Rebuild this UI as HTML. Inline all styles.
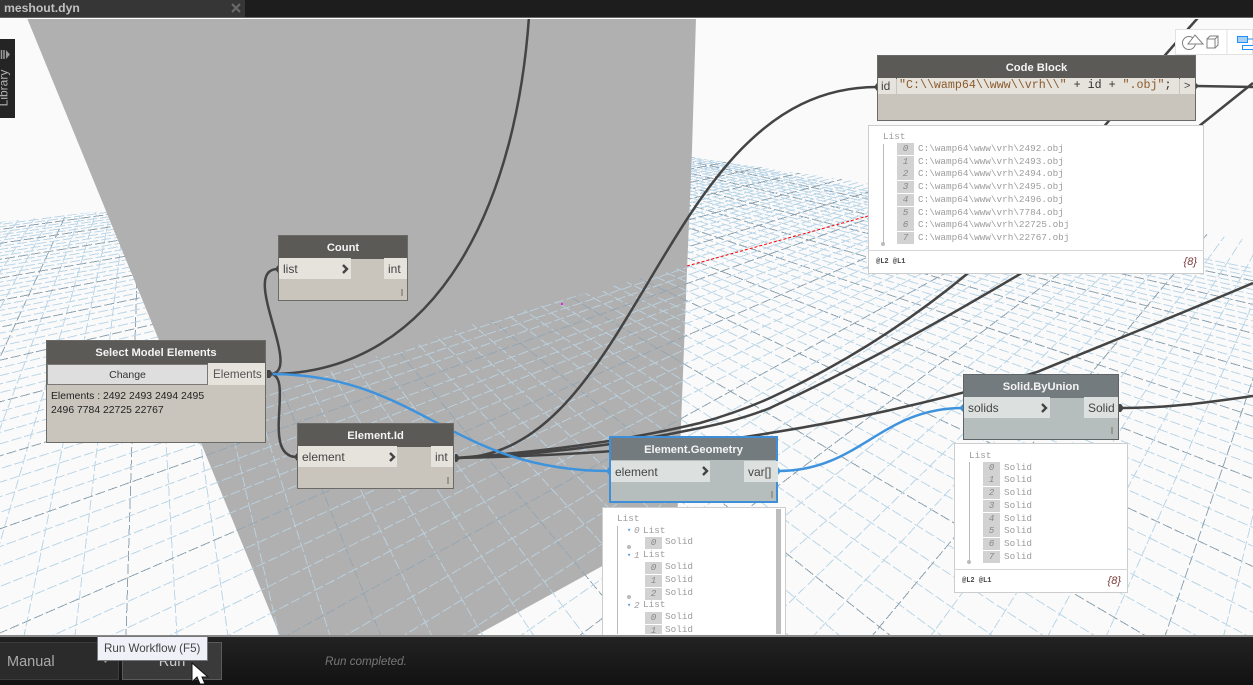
<!DOCTYPE html>
<html><head><meta charset="utf-8"><style>
html,body{margin:0;padding:0;background:#fafafa;width:1253px;height:685px;overflow:hidden}
#r{position:relative;width:1253px;height:685px;overflow:hidden;background:#fafafa;font-family:"Liberation Sans",sans-serif}
#r div,#r span.a{position:absolute;white-space:nowrap;box-sizing:border-box}
svg{position:absolute;left:0;top:0}
.n{background:#c9c5bd;border:1px solid #6c6a66}
.h{left:0;right:0;top:0;height:23px;background:#5c5a56;color:#f4f4f4;font-weight:bold;font-size:11.2px;line-height:25px;text-align:center}
.p{background:#e6e3dd;color:#444;font-size:12px;line-height:22px;height:21px;padding-left:4px}
.g{background:#b5bdbd;border-color:#5f6466}.g .h{background:#747b7f}.g .p{background:#dce1df}
.m{width:2px;height:7px;background:#99968f}
.l{background:#fff;border:2px solid #fff;outline:1px solid #cdcdcd;outline-offset:-1px;font-family:"Liberation Mono",monospace;font-size:9.35px;color:#9c9c9c;line-height:12px}
.b{width:17px;height:12px;background:#d2d2d2;color:#888;font-style:italic;text-align:center}
.f{font-size:7px;color:#444;font-weight:bold}
.t{font-size:11px;font-style:italic;color:#7b3b3b;font-family:"Liberation Sans",sans-serif}
.tri{color:#5a9bd5;font-size:7px}
.dot{width:4px;height:4px;border-radius:2px;background:#bbb}
</style></head><body><div id="r">
<svg width="1253" height="685" viewBox="0 0 1253 685">
<defs>
<clipPath id="c1"><polygon points="0,222 105,211 616,142 690,157 867,183 1253,241 1253,636 0,636"/></clipPath>
<clipPath id="c2"><polygon points="190,418 470,325 690,265 677,525 475,636 280,636"/></clipPath>
</defs>
<g id="g1" clip-path="url(#c1)" shape-rendering="crispEdges" fill="none"></g>
<polygon points="27,18 696,18 692,150 687,270 681,425 677,525 475,636 280,636" fill="#b0b0b0"/>
<g id="g2" clip-path="url(#c2)" shape-rendering="crispEdges" fill="none" opacity=".8"></g>
<path d="M687,266 L868,216" stroke="#f00" stroke-width="1" stroke-dasharray="3 2" fill="none"/>
<rect x="561" y="303" width="2" height="2" fill="#e020e0"/>
<g fill="none" stroke="#444" stroke-width="2.5">
<path d="M270,374 C440,374 520,200 530,0"/>
<path d="M270,374 C305,374 238,269 278,269"/>
<path d="M270,374 C295,374 260,457 297,457"/>
<path d="M455,458 C640,458 660,87 877,87"/>
<path d="M455,458 C540,452 620,442 700,423 C725,416 750,407 770,398 C837,367 903,327 967,274 C1040,210 1110,115 1205,10"/>
<path d="M455,458 C540,455 620,445 700,428 C725,423 750,416 770,408 C837,377 903,343 1020,274 C1090,230 1150,165 1203,123 L1253,83"/>
<path d="M455,458 C600,455 700,445 770,433 C870,417 960,395 1037,372 C1110,342 1190,310 1253,283"/>
<path d="M1196,86 L1253,87"/>
<path d="M1120,408 C1170,408 1210,402 1253,396"/>
</g>
<g fill="none" stroke="#3f93dd" stroke-width="2.5">
<path d="M270,374 C420,374 450,471 610,471"/>
<path d="M778,471 C860,471 880,408 963,408"/>
</g>
</svg>

<!-- top bar -->
<div style="left:0;top:0;width:1253px;height:17px;background:#1d1d1d"></div>
<div style="left:0;top:17px;width:1253px;height:1px;background:#666"></div>
<div style="left:0;top:18px;width:1253px;height:1px;background:#fff"></div>
<div style="left:0;top:0;width:245px;height:17px;background:#363636;color:#c0c0c0;font-weight:bold;font-size:12.2px;line-height:16px;padding-left:4px">meshout.dyn</div>
<svg width="1253" height="20"><path d="M232,4 L240,12 M240,4 L232,12" stroke="#6a6a6a" stroke-width="2"/></svg>

<!-- library -->
<div style="left:0;top:39px;width:15px;height:79px;background:#242424;overflow:hidden">
<div style="left:-24px;top:42px;width:55px;text-align:center;color:#b5b5b5;font-size:12px;line-height:14px;transform:rotate(-90deg)">Library</div>
</div>
<svg width="20" height="70"><path d="M1.5,50 V59 M4,50 V59" stroke="#999" stroke-width="1.5"/><path d="M6,50 L10,54.5 L6,59Z" fill="#999"/></svg>

<!-- view buttons -->
<div style="left:1175px;top:29px;width:78px;height:26px;background:#fff;border:1px solid #e2e2e2"></div>
<svg width="1253" height="60">
<g fill="none" stroke="#808080" stroke-width="1"><circle cx="1189" cy="43" r="6.5"/><path d="M1195,35 L1203,44 L1188,44Z" fill="#fff"/><path d="M1207,39 H1215 V48 H1207Z M1207,39 L1210,36 H1218 V45 L1215,48 M1215,39 L1218,36"/></g>
<path d="M1227,30 V54" stroke="#e2e2e2"/>
<rect x="1237.5" y="36.5" width="10" height="6" fill="#a8d0f0" stroke="#1e90ff"/>
<rect x="1242.5" y="45.5" width="11" height="4" fill="#fff" stroke="#1e90ff"/>
<path d="M1247,39 H1253" stroke="#1e90ff"/>
</svg>

<!-- Count -->
<div class="n" style="left:278px;top:235px;width:130px;height:66px"><div class="h">Count</div>
<div class="p" style="left:0;top:22px;width:72px">list</div><div class="p" style="left:105px;top:22px;width:23px">int</div>
<div class="m" style="left:122px;top:53px"></div></div>
<!-- Select -->
<div class="n" style="left:46px;top:340px;width:220px;height:103px"><div class="h">Select Model Elements</div>
<div style="left:0;top:23px;width:161px;height:21px;background:#dedede;border:1px solid #7c7a76;color:#333;font-size:10.5px;line-height:20px;text-align:center;">Change</div>
<div class="p" style="left:161px;top:22px;width:57px;height:22px;line-height:23px;padding-left:5px;color:#555;font-size:11.7px">Elements</div>
<div style="left:4px;top:49px;font-size:10.4px;line-height:14px;color:#222">Elements : 2492 2493 2494 2495<br>2496 7784 22725 22767</div></div>
<!-- Element.Id -->
<div class="n" style="left:297px;top:423px;width:157px;height:66px"><div class="h">Element.Id</div>
<div class="p" style="left:0;top:22px;width:99px">element</div><div class="p" style="left:133px;top:22px;width:22px">int</div>
<div class="m" style="left:149px;top:53px"></div></div>
<!-- Element.Geometry -->
<div class="n g" style="left:609px;top:436px;width:169px;height:67px;border:2px solid #3f8fd8"><div class="h" style="height:22px;line-height:24px">Element.Geometry</div>
<div class="p" style="left:0;top:23px;width:99px">element</div><div class="p" style="left:133px;top:23px;width:34px">var[]</div>
<div class="m" style="left:160px;top:53px"></div></div>
<!-- Solid.ByUnion -->
<div class="n g" style="left:963px;top:374px;width:156px;height:66px"><div class="h">Solid.ByUnion</div>
<div class="p" style="left:0;top:22px;width:86px">solids</div><div class="p" style="left:120px;top:22px;width:34px">Solid</div>
<div class="m" style="left:147px;top:52px"></div></div>
<!-- Code Block -->
<div class="n" style="left:877px;top:55px;width:319px;height:66px"><div class="h">Code Block</div>
<div class="p" style="left:0;top:22px;width:18px;height:16px;line-height:17px;padding-left:3px;">id</div>
<div class="p" style="left:19px;top:22px;width:282px;height:16px;line-height:16px;padding-left:2px;font-family:'Liberation Mono',monospace;font-size:11.65px;color:#8a5a2b">"C:\\wamp64\\www\\vrh\\" <span style="color:#333">+ id +</span> ".obj"<span style="color:#333">;</span></div>
<div class="p" style="left:302px;top:22px;width:15px;height:16px;line-height:16px;padding-left:4px;font-size:11px">&gt;</div></div>

<!-- chevrons & port dots -->
<svg width="1253" height="685">
<g fill="none" stroke="#444" stroke-width="2.4">
<path d="M343,265 L347,269 L343,273"/><path d="M390,453 L394,457 L390,461"/><path d="M703,467 L707,471 L703,475"/><path d="M1042,404 L1046,408 L1042,412"/>
</g>
<g fill="#444"><path d="M267,370 h3 l3,4 l-3,4 h-3z"/><path d="M455,454 h2 l3,4 l-3,4 h-2z"/><path d="M1196,83 l3,3 l-3,3z"/><path d="M1119,404 h2 l3,4 l-3,4 h-2z"/><path d="M877,83 l-3,4 l3,4z"/><path d="M278,265 l-3,4 l3,4z"/><path d="M297,453 l-3,4 l3,4z"/></g>
<g fill="#3f93dd"><path d="M609,467 l-3,4 l3,4z"/><path d="M778,467 l3,4 l-3,4z"/><path d="M963,404 l-4,4 l4,4z"/></g>
</svg>

<!-- Code list -->
<div class="l" style="left:868px;top:125px;width:336px;height:149px">
<div style="left:13px;top:4px">List</div>
<div style="left:13px;top:17px;width:1px;height:100px;background:#bbb"></div>
<div class="dot" style="left:11px;top:115px"></div>
<div class="b" style="left:27px;top:16px">0</div><div style="left:48px;top:16px">C:\wamp64\www\vrh\2492.obj</div>
<div class="b" style="left:27px;top:29px">1</div><div style="left:48px;top:29px">C:\wamp64\www\vrh\2493.obj</div>
<div class="b" style="left:27px;top:41px">2</div><div style="left:48px;top:41px">C:\wamp64\www\vrh\2494.obj</div>
<div class="b" style="left:27px;top:54px">3</div><div style="left:48px;top:54px">C:\wamp64\www\vrh\2495.obj</div>
<div class="b" style="left:27px;top:67px">4</div><div style="left:48px;top:67px">C:\wamp64\www\vrh\2496.obj</div>
<div class="b" style="left:27px;top:80px">5</div><div style="left:48px;top:80px">C:\wamp64\www\vrh\7784.obj</div>
<div class="b" style="left:27px;top:92px">6</div><div style="left:48px;top:92px">C:\wamp64\www\vrh\22725.obj</div>
<div class="b" style="left:27px;top:105px">7</div><div style="left:48px;top:105px">C:\wamp64\www\vrh\22767.obj</div>
<div style="left:-2px;right:-2px;top:123px;height:1px;background:#d5d5d5"></div>
<div class="f" style="left:6px;top:129px">@L2 @L1</div><div class="t" style="right:5px;top:129px">{8}</div>
</div>

<!-- Solid list -->
<div class="l" style="left:954px;top:443px;width:174px;height:150px">
<div style="left:13px;top:5px">List</div>
<div style="left:13px;top:17px;width:1px;height:100px;background:#bbb"></div>
<div class="dot" style="left:11px;top:115px"></div>
<div class="b" style="left:27px;top:17px">0</div><div style="left:48px;top:17px">Solid</div>
<div class="b" style="left:27px;top:29px">1</div><div style="left:48px;top:29px">Solid</div>
<div class="b" style="left:27px;top:42px">2</div><div style="left:48px;top:42px">Solid</div>
<div class="b" style="left:27px;top:55px">3</div><div style="left:48px;top:55px">Solid</div>
<div class="b" style="left:27px;top:68px">4</div><div style="left:48px;top:68px">Solid</div>
<div class="b" style="left:27px;top:80px">5</div><div style="left:48px;top:80px">Solid</div>
<div class="b" style="left:27px;top:93px">6</div><div style="left:48px;top:93px">Solid</div>
<div class="b" style="left:27px;top:106px">7</div><div style="left:48px;top:106px">Solid</div>
<div style="left:-2px;right:-2px;top:124px;height:1px;background:#d5d5d5"></div>
<div class="f" style="left:6px;top:130px">@L2 @L1</div><div class="t" style="right:5px;top:130px">{8}</div>
</div>

<!-- Geometry list -->
<div class="l" style="left:602px;top:507px;width:184px;height:129px;overflow:hidden">
<div style="left:13px;top:4px">List</div>
<div style="left:13px;top:17px;width:1px;height:110px;background:#bbb"></div>
<div style="left:172px;top:0;width:5px;height:127px;background:#bdbdbd"></div>
<div class="tri" style="left:23px;top:16px">&#9662;</div>
<div style="left:30px;top:16px;font-style:italic">0</div><div style="left:39px;top:16px">List</div>
<div class="b" style="left:41px;top:28px">0</div><div style="left:61px;top:27px">Solid</div>
<div class="dot" style="left:23px;top:36px"></div>
<div class="tri" style="left:23px;top:41px">&#9662;</div>
<div style="left:30px;top:41px;font-style:italic">1</div><div style="left:39px;top:40px">List</div>
<div class="b" style="left:41px;top:53px">0</div><div style="left:61px;top:52px">Solid</div>
<div class="b" style="left:41px;top:66px">1</div><div style="left:61px;top:65px">Solid</div>
<div class="b" style="left:41px;top:79px">2</div><div style="left:61px;top:78px">Solid</div>
<div class="dot" style="left:23px;top:86px"></div>
<div class="tri" style="left:23px;top:91px">&#9662;</div>
<div style="left:30px;top:91px;font-style:italic">2</div><div style="left:39px;top:90px">List</div>
<div class="b" style="left:41px;top:103px">0</div><div style="left:61px;top:102px">Solid</div>
<div class="b" style="left:41px;top:116px;height:9px">1</div><div style="left:61px;top:115px;height:10px;overflow:hidden">Solid</div>
</div>

<!-- bottom bar -->
<div style="left:0;top:635px;width:1253px;height:2px;background:#8a8a8a"></div>
<div style="left:0;top:637px;width:1253px;height:48px;background:linear-gradient(#222,#121212)"></div>
<div style="left:-1px;top:642px;width:120px;height:38px;background:#2b2b2b;border:1px solid #3c3c3c;color:#aaa;font-size:14.5px;line-height:38px;padding-left:7px">Manual</div>
<svg width="1253" height="685"><path d="M103,660 h5 l-2.5,3z" fill="#999"/></svg>
<div style="left:122px;top:642px;width:100px;height:38px;background:#3a3a3a;border:1px solid #5a5a5a;color:#ccc;font-size:14.5px;line-height:38px;text-align:center">Run</div>
<div style="left:325px;top:655px;font-size:11.7px;font-style:italic;color:#777">Run completed.</div>
<div style="left:97px;top:636px;width:111px;height:25px;background:#f0f0f8;border:1px solid #777;color:#444;font-size:11.6px;line-height:24px;padding-left:6px">Run Workflow (F5)</div>
<svg width="1253" height="685"><path d="M192,663 V682 L197,677 L200,684 H205 L202,677 L208,677Z" fill="#fff" stroke="#111" stroke-width="1"/></svg>
</div>
<script>
(function(){
var NS="http://www.w3.org/2000/svg",A=[144,46],B=[1369,40];
function add(g,x,vp,dark,dash){
 var ext=1.005,y0=636,x1=vp[0]+(x-vp[0])*ext,y1=vp[1]+(y0-vp[1])*ext;
 var l=document.createElementNS(NS,"line");
 l.setAttribute("x1",x1);l.setAttribute("y1",y1);l.setAttribute("x2",vp[0]);l.setAttribute("y2",vp[1]);
 l.setAttribute("stroke",dark?"#8fa4b3":"#bcd7e8");l.setAttribute("stroke-width","1");
 l.setAttribute("stroke-dasharray",dash);g.appendChild(l);
}
["g1","g2"].forEach(function(id){
 var g=document.getElementById(id);
 for(var k=-30;k<=58;k++){add(g,126+51*k,A,((k%5)+5)%5==0,"10 3");}
 for(var j=-54;j<=26;j++){add(g,-7+58.6*j,B,((j%5)+5)%5==0,"10 3");}
});
})();
</script>
</body></html>
